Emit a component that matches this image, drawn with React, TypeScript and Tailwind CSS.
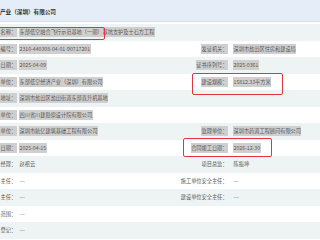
import React from 'react';

type Row = {
  label: string;
  value: string;
  rLabel?: string;
  rValue?: string;
  marked?: boolean;
};

// left labels are scrolled off to the left; only their tail is visible
const rows: Row[] = [
  { label: '名称：', value: '东部低空融合飞行示范基地（一期）基坑支护及土石方工程', marked: true },
  { label: '编号：', value: '2310-440308-04-01-90717201', rLabel: '发证机关：', rValue: '深圳市盐田区住房和建设局', marked: true },
  { label: '日期：', value: '2025-04-09', rLabel: '证书序列号：', rValue: '2025-0361', marked: true },
  { label: '单位：', value: '东部低空经济产业（深圳）有限公司', rLabel: '建设规模：', rValue: '15812.33平方米', marked: true },
  { label: '地址：', value: '深圳市盐田区盐田街道东部直升机基地', marked: true },
  { label: '单位：', value: '四川省川建勘察设计院有限公司', marked: true },
  { label: '单位：', value: '深圳市航亿建筑基础工程有限公司', rLabel: '监理单位：', rValue: '深圳市药道工程顾问有限公司', marked: true },
  { label: '日期：', value: '2025-04-15', rLabel: '合同竣工日期：', rValue: '2026-12-30', marked: true },
  { label: '经理：', value: '赵祖云', rLabel: '项目总监：', rValue: '陈振坤' },
  { label: '主任：', value: '---', rLabel: '施工单位安全主任：', rValue: '---' },
  { label: '主任：', value: '---', rLabel: '建设单位安全主任：', rValue: '---' },
  { label: '范围：', value: '---' },
  { label: '登记：', value: '---' },
];

const Cell: React.FC<{ text: string; marked?: boolean }> = ({ text, marked }) => (
  <span
    className={`inline-block whitespace-nowrap px-[0.5px] leading-[10px] ${marked ? 'bg-[#cfcfcf]' : ''}`}
  >
    {text}
  </span>
);

export default function App() {
  return (
    <div
      className="relative h-[240px] w-[320px] overflow-hidden bg-white text-[5.2px] text-[#555]"
      style={{ fontFamily: '"Noto Sans CJK SC", "Noto Sans", sans-serif' }}
    >
      <div className="flex h-[22px] items-center border-b border-[#d6dde4] bg-[#e5eef8] pt-[3px]">
        <span className="whitespace-nowrap text-[5.6px] font-bold text-[#333]">产业（深圳）有限公司</span>
      </div>

      <div className="pt-[2px]">
        {rows.map((r, i) => (
          <div
            key={i}
            className={`flex h-[16.5px] items-center ${i % 2 === 0 ? 'bg-[#eef4f3]' : ''}`}
          >
            <div className="flex w-[160px] shrink-0 items-center">
              <div className="flex w-[16px] shrink-0 justify-start">
                <Cell text={r.label} marked={r.marked} />
              </div>
              <div className="ml-[3px]">
                <Cell text={r.value} marked={r.marked} />
              </div>
            </div>
            {r.rLabel && (
              <div className="flex items-center">
                <div className="flex w-[68px] shrink-0 justify-end">
                  <Cell text={r.rLabel} marked={r.marked} />
                </div>
                <div className="ml-[5px]">
                  <Cell text={r.rValue ?? ''} marked={r.marked} />
                </div>
              </div>
            )}
          </div>
        ))}
      </div>

      {/* red annotation boxes */}
      <div className="absolute left-[-2px] top-[27px] h-[13px] w-[107px] rounded-[2px] border-[1.5px] border-[#e3353f]" />
      <div className="absolute left-[192px] top-[73px] h-[22px] w-[91px] rounded-[2px] border-[1.5px] border-[#e3353f]" />
      <div className="absolute left-[183px] top-[138px] h-[19px] w-[89px] rounded-[2px] border-[1.5px] border-[#e3353f]" />
    </div>
  );
}
